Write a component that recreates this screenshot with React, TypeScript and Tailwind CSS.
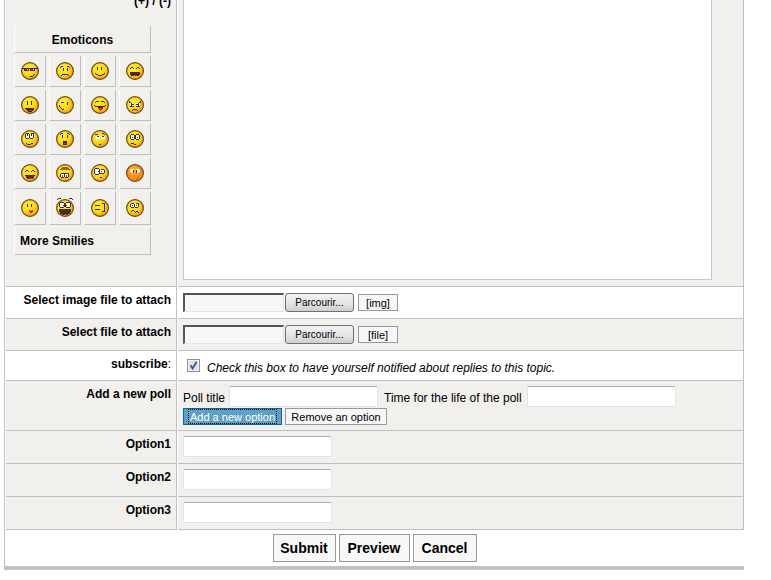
import { ReactNode, useId, useState } from "react";

type Pixel = [x: number, y: number, w: number, h: number, color?: string];

interface Face {
  name: string;
  pixels: Pixel[];
  blush?: boolean;
}

const R = "#f01818";
const W = "#ffffff";
const G = "#8a6a10";

// Facial features on an 18x18 grid, drawn over the yellow ball
const faces: Face[] = [
  {
    name: "Cool",
    pixels: [
      [1, 6, 16, 1], [3, 6, 5, 3], [9, 6, 5, 3], [4, 7, 1, 1, R], [6, 7, 1, 1, W],
      [10, 7, 1, 1, R], [12, 7, 1, 1, W], [9, 14, 3, 1], [12, 13, 1, 1], [13, 12, 1, 1],
    ],
  },
  {
    name: "Sad",
    pixels: [
      [4, 5, 1, 1], [5, 4, 2, 1], [11, 4, 2, 1], [13, 5, 1, 1], [7, 6, 1, 3],
      [11, 6, 1, 3], [6, 12, 6, 1], [5, 13, 1, 1], [12, 13, 1, 1],
    ],
  },
  {
    name: "Smile",
    pixels: [[6, 5, 1, 3], [10, 5, 1, 3], [4, 11, 1, 1], [5, 12, 2, 1], [7, 13, 4, 1], [11, 12, 2, 1], [13, 11, 1, 1]],
  },
  {
    name: "Laugh",
    pixels: [
      [4, 6, 1, 1], [5, 5, 2, 1], [7, 6, 1, 1], [10, 6, 1, 1], [11, 5, 2, 1],
      [13, 6, 1, 1], [4, 10, 10, 2], [4, 12, 10, 1], [5, 13, 8, 1], [8, 13, 3, 1, R],
    ],
  },
  {
    name: "Happy",
    pixels: [[6, 5, 1, 4], [10, 5, 1, 4], [4, 12, 9, 1], [5, 13, 8, 1], [6, 14, 6, 1], [8, 14, 3, 1, R], [7, 15, 4, 1]],
  },
  {
    name: "Wink",
    pixels: [[5, 6, 3, 1], [11, 6, 1, 3], [3, 9, 1, 1], [4, 11, 1, 1], [5, 12, 1, 1], [6, 13, 2, 1], [3, 10, 1, 1]],
  },
  {
    name: "Tongue",
    pixels: [
      [4, 6, 1, 1], [5, 5, 3, 1], [10, 5, 3, 1], [13, 6, 1, 1], [3, 9, 1, 1],
      [4, 10, 10, 1], [14, 9, 1, 1], [7, 11, 5, 1], [7, 12, 5, 1, R], [8, 13, 3, 1, R], [9, 14, 1, 1, R],
    ],
  },
  {
    name: "Angry",
    pixels: [
      [4, 7, 3, 3, W], [11, 7, 3, 3, W], [3, 5, 1, 2], [4, 6, 1, 1], [5, 7, 1, 1], [6, 8, 2, 1],
      [14, 5, 1, 2], [13, 6, 1, 1], [12, 7, 1, 1], [10, 8, 2, 1], [5, 8, 1, 2], [12, 8, 1, 2],
      [4, 10, 4, 1], [10, 10, 4, 1], [7, 13, 4, 1], [6, 14, 1, 1], [11, 14, 1, 1],
    ],
  },
  {
    name: "Rolleyes",
    pixels: [
      [5, 3, 3, 1], [10, 3, 3, 1], [4, 4, 1, 4], [5, 4, 3, 4, W], [8, 4, 1, 4], [9, 4, 3, 4, W],
      [12, 4, 1, 4], [6, 4, 1, 2], [10, 4, 1, 2], [5, 8, 3, 1], [9, 8, 3, 1], [5, 13, 1, 1],
      [6, 14, 4, 1], [10, 13, 2, 1],
    ],
  },
  {
    name: "Surprised",
    pixels: [
      [4, 4, 1, 1], [5, 3, 2, 1], [11, 3, 2, 1], [13, 4, 1, 1], [6, 5, 1, 3], [11, 5, 1, 3],
      [7, 11, 4, 4], [8, 13, 2, 1, R],
    ],
  },
  {
    name: "Innocent",
    pixels: [
      [4, 4, 3, 1], [11, 3, 2, 1], [13, 4, 1, 1], [5, 6, 4, 3, W], [10, 6, 4, 3, W], [6, 6, 2, 1],
      [11, 6, 2, 1], [8, 14, 2, 1],
    ],
  },
  {
    name: "Confused",
    pixels: [
      [5, 4, 3, 1], [10, 4, 3, 1], [4, 5, 1, 4], [5, 5, 3, 4, W], [8, 5, 2, 4], [10, 5, 3, 4, W],
      [13, 5, 1, 4], [6, 7, 1, 1], [11, 7, 1, 1], [5, 9, 3, 1], [10, 9, 3, 1], [5, 13, 3, 1], [8, 14, 2, 1],
    ],
  },
  {
    name: "Grin",
    pixels: [
      [4, 7, 1, 1], [5, 6, 2, 1], [7, 7, 1, 1], [10, 7, 1, 1], [11, 6, 2, 1], [13, 7, 1, 1],
      [4, 11, 10, 1], [5, 12, 8, 2], [6, 14, 6, 1], [8, 14, 3, 1, R],
    ],
  },
  {
    name: "Upside down",
    pixels: [
      [6, 3, 6, 1, "#a85a10"], [5, 4, 8, 1, "#a85a10"], [4, 5, 10, 1, "#a85a10"], [5, 9, 8, 1],
      [4, 10, 1, 3], [5, 10, 3, 3, W], [8, 10, 1, 3], [9, 10, 3, 3, W], [12, 10, 1, 3], [6, 11, 1, 2, G],
      [10, 11, 1, 2, G], [5, 13, 3, 1], [9, 13, 3, 1],
    ],
  },
  {
    name: "Stare",
    pixels: [
      [4, 4, 4, 1], [3, 5, 1, 5], [4, 5, 4, 5, W], [8, 5, 1, 5], [4, 10, 4, 1], [10, 5, 3, 1],
      [9, 6, 4, 3, W], [13, 6, 1, 3], [9, 9, 4, 1], [7, 7, 1, 1], [10, 7, 1, 1], [9, 13, 2, 1],
    ],
  },
  {
    name: "Embarrassed",
    blush: true,
    pixels: [
      [5, 5, 3, 1, W], [4, 6, 4, 2, W], [5, 8, 2, 1, W], [10, 5, 3, 1, W], [10, 6, 4, 2, W],
      [11, 8, 2, 1, W], [7, 6, 1, 3], [10, 6, 1, 3], [10, 15, 1, 1, G], [11, 14, 1, 1, G], [12, 13, 1, 1, G],
    ],
  },
  {
    name: "Kiss",
    pixels: [[6, 5, 1, 3], [10, 5, 1, 3], [8, 11, 1, 1, R], [10, 11, 2, 1, R], [8, 12, 4, 1, R], [9, 13, 2, 1, R]],
  },
  {
    name: "Crazy",
    pixels: [
      [2, -1, 3, 1], [1, 0, 1, 1], [13, -1, 3, 1], [16, 0, 1, 1], [4, 3, 4, 1], [10, 3, 4, 1],
      [3, 4, 1, 4], [4, 4, 4, 4, W], [8, 4, 2, 4], [10, 4, 4, 4, W], [14, 4, 1, 4], [7, 6, 1, 1],
      [10, 6, 1, 1], [4, 8, 4, 1], [10, 8, 4, 1], [3, 10, 12, 3], [4, 13, 10, 2], [6, 15, 6, 1], [8, 15, 3, 1, R],
    ],
  },
  {
    name: "Bracket",
    pixels: [[4, 6, 5, 1], [4, 10, 5, 1], [11, 4, 3, 1], [13, 4, 1, 9], [11, 12, 3, 1]],
  },
  {
    name: "Uneasy",
    pixels: [
      [5, 4, 3, 1], [10, 4, 3, 1], [4, 5, 1, 3], [5, 5, 3, 3, W], [8, 5, 1, 3], [9, 5, 3, 3, W],
      [12, 5, 1, 3], [6, 6, 1, 1], [10, 6, 1, 1], [5, 8, 3, 1], [9, 8, 3, 1], [5, 12, 1, 1],
      [6, 11, 2, 1], [8, 12, 1, 1], [9, 13, 1, 1], [10, 12, 2, 1], [12, 13, 1, 1],
    ],
  },
];

function Smiley({ face }: { face: Face }) {
  const id = useId();
  return (
    <svg className="size-[18px] overflow-visible" viewBox="0 0 18 18" aria-hidden="true">
      <defs>
        <radialGradient id={id} cx="0.4" cy="0.36" r="0.68">
          <stop offset="0" stopColor={face.blush ? "#ffc02c" : "#ffec3c"} />
          <stop offset="0.55" stopColor={face.blush ? "#ff8a20" : "#fdd820"} />
          <stop offset="1" stopColor={face.blush ? "#f88a10" : "#ee9410"} />
        </radialGradient>
      </defs>
      <circle cx="9" cy="9" r="8.4" fill={`url(#${id})`} stroke="#6b4816" strokeWidth="1.2" />
      <g shapeRendering="crispEdges">
        {face.pixels.map(([x, y, w, h, color], i) => (
          <rect key={i} x={x} y={y} width={w} height={h} fill={color ?? "#43300a"} />
        ))}
      </g>
    </svg>
  );
}

const raised = "border-l border-r border-b border-l-white border-r-[#bcc0c4] border-b-[#bcc0c4]";
const smallButton = "h-[17px] border border-[#999] bg-[#f7f7f7] pt-px text-[11px] leading-[14px]";
const largeButton = "h-7 border border-[#999] bg-[#f7f7f7]";
const textInput =
  "h-[21px] w-[149px] rounded-[2px] border border-[#e2e3ea] border-t-[#abadb3] bg-white px-1 outline-none";

function Row({
  label,
  shaded = true,
  className = "",
  children,
}: {
  label: ReactNode;
  shaded?: boolean;
  className?: string;
  children: ReactNode;
}) {
  const cell = `border-r border-b border-[#bdc1c5] ${shaded ? "bg-[#f1f0ec]" : "bg-white"}`;
  return (
    <div className="flex gap-px">
      <div className={`${cell} w-[171px] shrink-0 pt-1.5 pr-[5px] text-right font-bold`}>{label}</div>
      <div className={`${cell} min-w-0 flex-1 pl-[5px] ${className}`}>{children}</div>
    </div>
  );
}

function FilePicker({ id, tag }: { id: string; tag: string }) {
  return (
    <div className="flex items-center">
      <input
        id={id}
        type="text"
        readOnly
        className="h-[19px] w-[101px] border-t-2 border-r border-b border-l-2 border-[#e3e3e3] border-t-[#555] border-l-[#555] bg-[#f7f7f7] px-1 outline-none"
      />
      <button
        type="button"
        className="ml-px h-[19px] w-[69px] rounded-[3px] border border-[#707070] bg-linear-to-b from-[#f2f2f2] via-[#e6e6e6] to-[#cfcfcf] pt-px text-[10px] leading-4"
      >
        Parcourir...
      </button>
      <button type="button" className={`${smallButton} ml-1 w-10`}>
        {tag}
      </button>
    </div>
  );
}

export default function App() {
  const [subscribed, setSubscribed] = useState(true);
  const [options, setOptions] = useState(3);

  return (
    <main className="min-h-screen overflow-hidden bg-white pr-[27px] pl-1 font-['Liberation_Sans',Arial,sans-serif] text-[12px] leading-[14px] text-black">
      <form
        className="border-b-4 border-l border-[#bdc1c5]"
        onSubmit={(e) => e.preventDefault()}
      >
        <div className="pl-px">
          {/* Message body with the smilies palette */}
          <div className="flex gap-px">
            <div className="w-[171px] shrink-0 border-r border-b border-[#bdc1c5] bg-[#f1f0ec] pb-[31px] pl-2">
              <div className="-mt-1.5 pr-[5px] text-right font-bold">(+) / (-)</div>
              <div className="mt-[18px] grid w-[137px] grid-cols-4 gap-[3px]">
                <div className={`${raised} col-span-4 flex h-[27px] items-center justify-center pt-0.5 font-bold`}>
                  Emoticons
                </div>
                {faces.map((face, i) => (
                  <button
                    key={face.name}
                    type="button"
                    aria-label={face.name}
                    className={`${raised} flex items-center justify-center ${i < 16 ? "h-[31px]" : "h-[33px]"}`}
                  >
                    <Smiley face={face} />
                  </button>
                ))}
                <a href="#smilies" className={`${raised} col-span-4 flex h-[27px] items-center pl-[5px] font-bold`}>
                  More Smilies
                </a>
              </div>
            </div>
            <div className="flex min-w-0 flex-1 border-r border-b border-[#bdc1c5] bg-[#f1f0ec] pr-[31px] pb-1.5 pl-[5px]">
              <textarea
                aria-label="Message"
                className="w-full resize-none border border-t-0 border-[#c6c8ca] bg-white p-1 outline-none"
              />
            </div>
          </div>

          <Row label={<label htmlFor="image">Select image file to attach</label>} shaded={false} className="py-1.5">
            <FilePicker id="image" tag="[img]" />
          </Row>
          <Row label={<label htmlFor="file">Select file to attach</label>} className="py-1.5">
            <FilePicker id="file" tag="[file]" />
          </Row>
          <Row
            label={<>subscribe<span className="font-normal">:</span></>}
            shaded={false}
            className="pt-2 pb-[5px]"
          >
            <label className="flex h-4 items-start gap-[7px] pl-1 italic">
              <span className="relative size-[13px] shrink-0">
                <input
                  type="checkbox"
                  checked={subscribed}
                  onChange={(e) => setSubscribed(e.target.checked)}
                  className="block size-[13px] appearance-none border border-[#8e8f8f] bg-[#dfe3e8] shadow-[inset_0_0_0_1px_#f4f4f4]"
                />
                {subscribed && (
                  <svg className="pointer-events-none absolute inset-0 size-[13px]" viewBox="0 0 13 13">
                    <path d="M3.5 6.2 5.6 9.4 9.6 2.8" fill="none" stroke="#4659a0" strokeWidth="2" />
                  </svg>
                )}
              </span>
              <span className="pt-0.5">Check this box to have yourself notified about replies to this topic.</span>
            </label>
          </Row>

          {/* Poll */}
          <Row label="Add a new poll" className="pt-[5px] pb-[5px]">
            <div className="flex items-center">
              <label htmlFor="poll-title" className="pt-0.5">Poll title</label>
              <input id="poll-title" type="text" className={`${textInput} ml-1`} />
              <label htmlFor="poll-time" className="ml-1.5 pt-0.5">Time for the life of the poll</label>
              <input id="poll-time" type="text" className={`${textInput} ml-[5px]`} />
            </div>
            <div className="mt-px flex gap-[3px]">
              <button
                type="button"
                onClick={() => setOptions(options + 1)}
                className="h-[17px] w-[99px] border border-[#0f6796] bg-[#5f9fc3] px-1 text-[11px] leading-[14px] text-white"
              >
                <span className="block h-[15px] border border-dotted border-black">Add a new option</span>
              </button>
              <button
                type="button"
                onClick={() => setOptions(Math.max(0, options - 1))}
                className={`${smallButton} w-[102px]`}
              >
                Remove an option
              </button>
            </div>
          </Row>
          {Array.from({ length: options }, (_, i) => (
            <Row
              key={i}
              label={<label htmlFor={`option-${i + 1}`}>{`Option${i + 1}`}</label>}
              className="pt-[5px] pb-1.5"
            >
              <input id={`option-${i + 1}`} type="text" className={`${textInput} block`} />
            </Row>
          ))}
        </div>

        <div className="flex justify-center gap-[3px] py-1 text-[14px] font-bold">
          <button type="submit" className={`${largeButton} w-[63px]`}>Submit</button>
          <button type="button" className={`${largeButton} w-[71px]`}>Preview</button>
          <button type="button" className={`${largeButton} w-16`}>Cancel</button>
        </div>
      </form>
    </main>
  );
}
